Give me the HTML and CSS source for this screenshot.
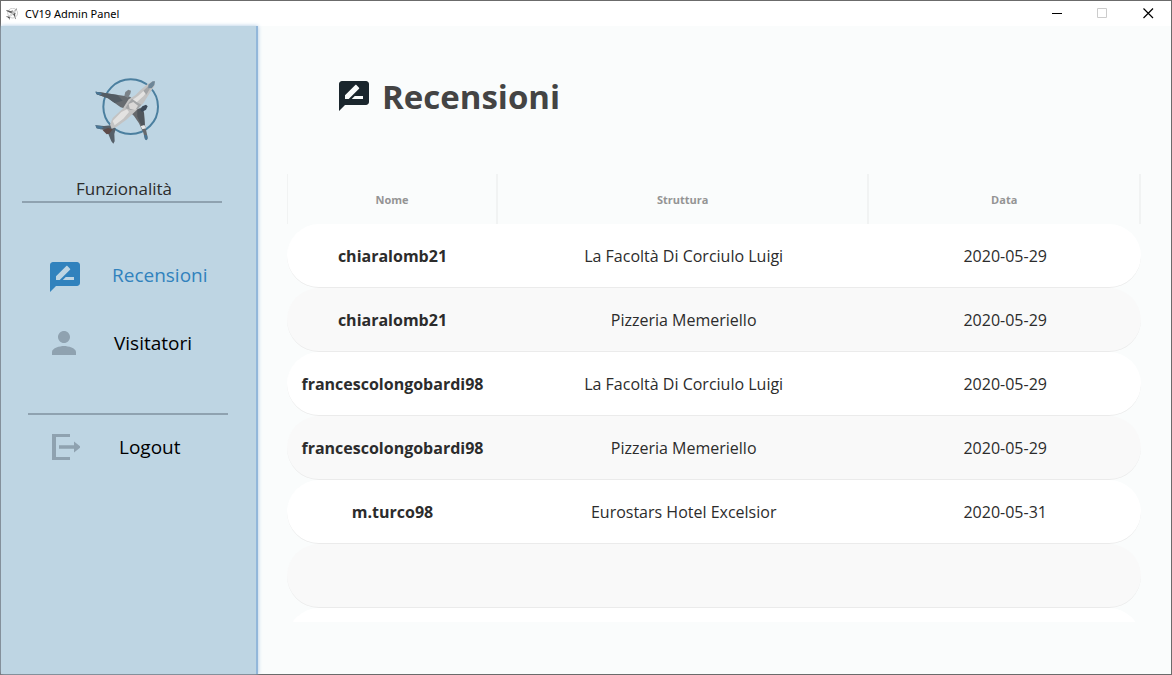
FILE: index.html
```html
<!DOCTYPE html>
<html lang="it">
<head>
<meta charset="utf-8">
<meta name="viewport" content="width=device-width, initial-scale=1">
<title>CV19 Admin Panel</title>
<link rel="stylesheet" href="styles.css">
</head>
<body>
<svg class="symbols" aria-hidden="true">
  <symbol id="plane" viewBox="42 36 198 201">
    <circle cx="152" cy="122" r="82" fill="none" stroke="#4b7f9f" stroke-width="6"/>
    <path fill="#666b70" d="M47 77L60 79L115 87L150 92L168 108L150 132L122 124L104 111L84 97L50 85z"/>
    <path fill="#535c64" d="M47 77L60 79L112 87L128 104L104 111L84 97L50 85z"/>
    <path fill="#7b8288" d="M133 90L136 78L145 71L153 74L151 83L144 96z"/>
    <path fill="#66696c" d="M150 138L186 124L192 142L195 178L203 214L201 222L195 220L190 200L177 172L162 150z"/>
    <path fill="#50565c" d="M172 130L188 128L192 142L194 178L184 178L172 152z"/>
    <path fill="#3d4a59" d="M181 131L187 121L198 116L203 121L198 131L186 138z"/>
    <path fill="#566069" d="M46 178L72 180L94 178L107 188L103 204L104 226L100 233L94 226L84 202L72 192L50 187z"/>
    <path fill="#5d4a48" d="M68 193L84 186L98 190L88 203L80 205z"/>
    <path fill="#c3c3c3" d="M90 176L98 156L128 128L146 100L166 88L184 70L202 55L218 46L225 46L223 60L206 86L190 112L168 134L138 162L108 184L95 188z"/>
    <path fill="#e3e2e1" d="M98 165L124 138L141 130L147 138L130 158L104 178zM158 101L174 90L198 68L208 69L190 91L170 109z"/>
    <path fill="#a3a5a7" d="M146 110L156 98L168 107L184 116L174 128L152 132L136 127zM190 74L206 59L209 70L199 86z"/>
    <path fill="#dad8d7" d="M146 114L160 108L174 119L166 132L149 128z"/>
    <path fill="#6d8698" d="M205 56L218 46L225 46L223 57L215 67L205 67z"/>
    <path fill="#e8e8e8" d="M182 181L193 177L198 187L187 190z"/>
    <path fill="#4a7695" d="M192 206L201 208L203 218L199 223L195 220zM46 77L60 79L67 84L60 88L49 84zM46 178L64 180L71 184L62 190L50 187z"/>
  </symbol>
  <symbol id="review" viewBox="2 2 20 20">
    <path fill="currentColor" d="M20 2H4c-1.100 0-2 .9-2 2v18l4-4h14c1.100 0 2-.9 2-2V4c0-1.100-.9-2-2-2zM6 14v-2.470l6.880-6.880c.2-.2.510-.2.710 0l1.770 1.770c.2.2.2.510 0 .710L8.470 14H6zm12 0h-7.500l2-2H18v2z"/>
  </symbol>
  <symbol id="person" viewBox="4 4 16 16">
    <path fill="currentColor" d="M12 12c2.210 0 4-1.790 4-4s-1.790-4-4-4-4 1.790-4 4 1.790 4 4 4zm0 2c-2.670 0-8 1.340-8 4v2h16v-2c0-2.660-5.330-4-8-4z"/>
  </symbol>
  <symbol id="exit" viewBox="0 0 30 28">
    <path fill="currentColor" d="M2 1h18v3H6v20h14v3H2zM9 12.200h15V8.500l7 5.500-7 5.500v-3.700H9z"/>
  </symbol>
</svg>
<div class="window">
  <header class="titlebar">
    <svg class="titlebar-icon" aria-hidden="true"><use href="#plane"/></svg>
    <span class="titlebar-name">CV19 Admin Panel</span>
    <button class="control" type="button" aria-label="Riduci a icona">
      <svg viewBox="0 0 11 11"><path d="M1 5.500h10" stroke="#000"/></svg>
    </button>
    <button class="control" type="button" aria-label="Ingrandisci" disabled>
      <svg viewBox="0 0 11 11"><path d="M.5.5h9v9h-9z" fill="none" stroke="#ccc"/></svg>
    </button>
    <button class="control" type="button" aria-label="Chiudi">
      <svg viewBox="0 0 11 11"><path d="M.5.5l9.500 9.500M10 .5L.5 10" stroke="#000" stroke-width="1.200"/></svg>
    </button>
  </header>
  <div class="body">
    <aside class="sidebar">
      <svg class="logo" role="img" aria-label="CV19"><use href="#plane"/></svg>
      <h2 class="sidebar-title">Funzionalità</h2>
      <nav class="menu">
        <button class="menu-item menu-item-active" type="button"><svg class="menu-icon" aria-hidden="true"><use href="#review"/></svg>Recensioni</button>
        <button class="menu-item menu-item-person" type="button"><svg class="menu-icon" aria-hidden="true"><use href="#person"/></svg>Visitatori</button>
      </nav>
      <div class="session">
        <button class="menu-item menu-item-exit" type="button"><svg class="menu-icon" aria-hidden="true"><use href="#exit"/></svg>Logout</button>
      </div>
    </aside>
    <main class="content">
      <h1 class="heading"><svg class="heading-icon" aria-hidden="true"><use href="#review"/></svg>Recensioni</h1>
      <div class="table-view">
        <table class="reviews">
          <thead>
            <tr><th class="col-name" scope="col">Nome</th><th class="col-place" scope="col">Struttura</th><th class="col-date" scope="col">Data</th></tr>
          </thead>
          <tbody>
            <tr><td>chiaralomb21</td><td>La Facoltà Di Corciulo Luigi</td><td>2020-05-29</td></tr>
            <tr><td>chiaralomb21</td><td>Pizzeria Memeriello</td><td>2020-05-29</td></tr>
            <tr><td>francescolongobardi98</td><td>La Facoltà Di Corciulo Luigi</td><td>2020-05-29</td></tr>
            <tr><td>francescolongobardi98</td><td>Pizzeria Memeriello</td><td>2020-05-29</td></tr>
            <tr><td>m.turco98</td><td>Eurostars Hotel Excelsior</td><td>2020-05-31</td></tr>
            <tr><td></td><td></td><td></td></tr>
            <tr><td></td><td></td><td></td></tr>
          </tbody>
        </table>
      </div>
    </main>
  </div>
</div>
</body>
</html>
```
FILE: styles.css
```css
* {
  box-sizing: border-box;
}

body {
  margin: 0;
  font-family: "Open Sans", "Noto Sans", sans-serif;
  color: #2c2c2c;
}

button {
  padding: 0;
  border: 0;
  background: none;
  font: inherit;
  color: inherit;
}

.symbols {
  position: absolute;
  width: 0;
  height: 0;
}

.window {
  display: flex;
  flex-direction: column;
  height: 100vh;
  border: 1px solid #6b6b6b;
  background: #fafcfc;
}

.titlebar {
  display: flex;
  align-items: center;
  flex: none;
  height: 25px;
  padding-left: 5px;
  background: #fff;
  font-family: "Noto Sans", "Open Sans", sans-serif;
  font-size: 11px;
  color: #000;
}

.titlebar-icon {
  width: 12px;
  height: 12px;
  margin-right: 7px;
  filter: grayscale(1);
}

.titlebar-name {
  flex: 1;
}

.control {
  display: grid;
  place-items: center;
  width: 46px;
  height: 25px;
}

.control svg {
  width: 11px;
  height: 11px;
}

.body {
  display: flex;
  flex: 1;
  min-height: 0;
}

.sidebar {
  flex: none;
  width: 257px;
  padding: 52px 28px 0 21px;
  border-right: 2px solid #93b7da;
  background: #bed5e3;
  box-shadow: 0 0 4px #a9c6e2;
}

.logo {
  display: block;
  width: 66px;
  height: 67px;
  margin-left: 72px;
}

.sidebar-title {
  width: 200px;
  margin: 31px 0 0;
  padding-left: 4px;
  border-bottom: 2px solid #8fa2b0;
  font-size: 17px;
  line-height: 25px;
  font-weight: 400;
  text-align: center;
}

.menu {
  display: grid;
  gap: 28px;
  padding: 52px 0 50px 28px;
}

.menu-item {
  display: flex;
  align-items: center;
  gap: 32px;
  height: 40px;
  font-size: 19px;
  color: #000;
}

.menu-icon {
  width: 30px;
  height: 30px;
  color: #8fa2b0;
}

.menu-item-active,
.menu-item-active .menu-icon {
  color: #3182bd;
}

.menu-item-active .menu-icon {
  margin-top: 4px;
}

.menu-item-person {
  gap: 36px;
}

.menu-item-person .menu-icon {
  width: 28px;
  height: 24px;
}

.session {
  width: 200px;
  margin-left: 6px;
  padding: 12px 0 0 22px;
  border-top: 2px solid #8fa2b0;
}

.menu-item-exit {
  gap: 39px;
}

.content {
  display: flex;
  flex-direction: column;
  flex: 1;
  min-width: 0;
  padding: 40px 30px 52px 29px;
}

.heading {
  display: flex;
  align-items: center;
  gap: 13px;
  height: 60px;
  margin: 0 0 48px 52px;
  font-size: 33px;
  font-weight: 700;
  color: #444;
}

.heading-icon {
  width: 30px;
  height: 30px;
  color: #1a262d;
}

.table-view {
  flex: 1;
  min-height: 0;
  overflow: hidden;
}

.reviews {
  width: 100%;
  table-layout: fixed;
  border-spacing: 0;
  text-align: center;
}

.reviews th {
  height: 50px;
  padding: 0;
  border-right: 2px solid #f1f3f3;
  font-size: 11px;
  color: #949494;
}

.reviews th:first-child {
  border-left: 1px solid #f1f3f3;
}

.col-name {
  width: 24.7%;
}

.col-place {
  width: 43.5%;
}

.reviews td {
  height: 64px;
  padding: 0;
  border-bottom: 1px solid #ebebeb;
  background: #fff;
  font-size: 16px;
}

.reviews tr:nth-child(even) td {
  background: #f9f9f9;
}

.reviews td:first-child {
  border-radius: 32px 0 0 32px;
  font-weight: 700;
}

.reviews td:last-child {
  border-radius: 0 32px 32px 0;
}
```
